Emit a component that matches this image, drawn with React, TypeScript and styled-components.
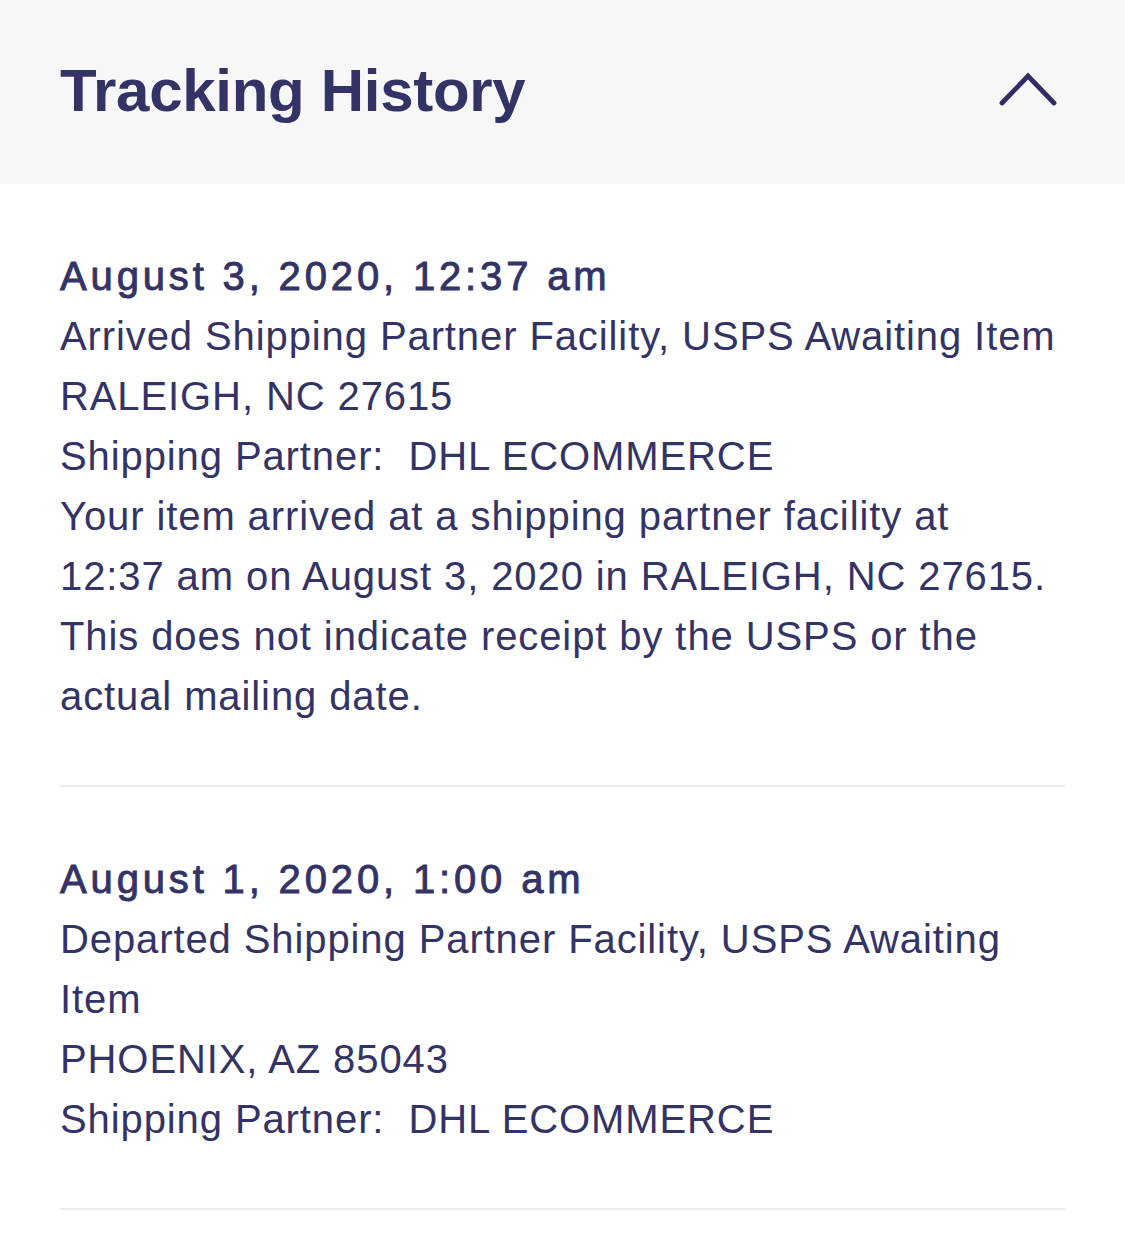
import React from "react";
import styled, { createGlobalStyle } from "styled-components";

const Global = createGlobalStyle`
  html, body { margin: 0; padding: 0; background: #ffffff; }
  body { font-family: "Liberation Sans", Arial, sans-serif; color: #333366; }
`;

const Page = styled.div`
  width: 1125px;
  min-height: 1247px;
  background: #ffffff;
`;

const Header = styled.div`
  height: 184px;
  background: #f7f7f7;
  display: flex;
  align-items: center;
  justify-content: space-between;
  padding: 0 66px 0 60px;
  box-sizing: border-box;
`;

const Title = styled.h1`
  margin: 0;
  font-size: 60px;
  font-weight: 700;
  color: #333366;
  letter-spacing: -0.3px;
  margin-top: -4px;
`;

const Chevron = styled.svg`
  display: block;
  margin-top: -6px;
`;

const Events = styled.div`
  padding: 0 60px;
`;

const Event = styled.div`
  padding: 62px 0 59px;
  border-bottom: 2px solid #ebebeb;
  font-size: 40px;
  line-height: 60px;
  letter-spacing: 0.9px;
`;

const DateLine = styled.div`
  font-weight: 400;
  -webkit-text-stroke: 0.9px #333366;
  letter-spacing: 3.85px;
`;

const Line = styled.div`
  white-space: pre-wrap;
`;

type Ev = { date: string; lines: string[] };

const events: Ev[] = [
  {
    date: "August 3, 2020, 12:37 am",
    lines: [
      "Arrived Shipping Partner Facility, USPS Awaiting Item",
      "RALEIGH, NC 27615",
      "Shipping Partner:  DHL ECOMMERCE",
      "Your item arrived at a shipping partner facility at 12:37 am on August 3, 2020 in RALEIGH, NC 27615. This does not indicate receipt by the USPS or the actual mailing date.",
    ],
  },
  {
    date: "August 1, 2020, 1:00 am",
    lines: [
      "Departed Shipping Partner Facility, USPS Awaiting Item",
      "PHOENIX, AZ 85043",
      "Shipping Partner:  DHL ECOMMERCE",
    ],
  },
];

export default function App() {
  return (
    <Page>
      <Global />
      <Header>
        <Title>Tracking History</Title>
        <Chevron width="62" height="36" viewBox="0 0 62 36" fill="none">
          <path d="M5 32 L31 5 L57 32" stroke="#2f2d62" strokeWidth="4.8" strokeLinecap="round" strokeLinejoin="miter" />
        </Chevron>
      </Header>
      <Events>
        {events.map((e) => (
          <Event key={e.date}>
            <DateLine>{e.date}</DateLine>
            {e.lines.map((l, i) => (
              <Line key={i}>{l}</Line>
            ))}
          </Event>
        ))}
      </Events>
    </Page>
  );
}
